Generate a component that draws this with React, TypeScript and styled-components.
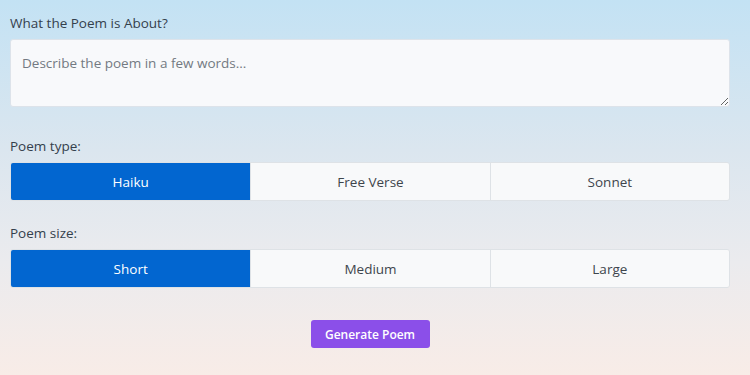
import React, { useState } from 'react'
import styled, { createGlobalStyle } from 'styled-components'

const GlobalStyle = createGlobalStyle`
  html, body {
    margin: 0;
    padding: 0;
    height: 100%;
  }
  body {
    font-family: "Open Sans", "Noto Sans", "Liberation Sans", sans-serif;
    background: linear-gradient(180deg, #c3e2f4 0%, #dbe6ef 40%, #ebebee 70%, #f8ece7 100%);
    min-height: 375px;
    color: #2b3a4a;
  }
`

const Page = styled.div`
  width: 720px;
  padding: 14px 0 0 10px;
  display: flex;
  flex-direction: column;
`

const Label = styled.label`
  display: block;
  font-size: 13.5px;
  line-height: 18px;
  color: #34404c;
  margin-bottom: 7px;
`

const Field = styled.div<{ $gap: number }>`
  margin-bottom: ${p => p.$gap}px;
`

const TextArea = styled.textarea`
  display: block;
  box-sizing: border-box;
  width: 100%;
  height: 68px;
  padding: 14px 11px;
  border: 1px solid #dde3ea;
  border-radius: 3px;
  background: #f8f9fb;
  font-family: inherit;
  font-size: 13.5px;
  color: #333;
  resize: vertical;
  outline: none;

  &::placeholder {
    color: #737a82;
  }
`

const Segments = styled.div`
  display: grid;
  grid-template-columns: repeat(3, 1fr);
  border-radius: 3px;
  overflow: hidden;
  border: 1px solid #dee2e6;
`

const Segment = styled.button<{ $active: boolean }>`
  height: 37px;
  border: none;
  border-left: 1px solid #dee2e6;
  background: ${p => (p.$active ? '#0266d0' : '#f8f9fa')};
  color: ${p => (p.$active ? '#ffffff' : '#3e454c')};
  font-family: inherit;
  font-size: 13.5px;
  cursor: pointer;

  &:first-child {
    border-left: none;
  }
`

const Actions = styled.div`
  display: flex;
  justify-content: center;
  margin-top: 9px;
`

const GenerateButton = styled.button`
  width: 119px;
  height: 28px;
  border: none;
  border-radius: 3px;
  background: #8b4fe9;
  color: #ffffff;
  font-family: inherit;
  font-weight: 600;
  font-size: 12px;
  cursor: pointer;
`

const TYPES = ['Haiku', 'Free Verse', 'Sonnet']
const SIZES = ['Short', 'Medium', 'Large']

export default function App() {
  const [type, setType] = useState('Haiku')
  const [size, setSize] = useState('Short')

  return (
    <>
      <GlobalStyle />
      <Page>
        <Field $gap={30}>
          <Label>What the Poem is About?</Label>
          <TextArea placeholder="Describe the poem in a few words..." />
        </Field>
        <Field $gap={23}>
          <Label>Poem type:</Label>
          <Segments>
            {TYPES.map(t => (
              <Segment key={t} $active={t === type} onClick={() => setType(t)}>{t}</Segment>
            ))}
          </Segments>
        </Field>
        <Field $gap={23}>
          <Label>Poem size:</Label>
          <Segments>
            {SIZES.map(s => (
              <Segment key={s} $active={s === size} onClick={() => setSize(s)}>{s}</Segment>
            ))}
          </Segments>
        </Field>
        <Actions>
          <GenerateButton>Generate Poem</GenerateButton>
        </Actions>
      </Page>
    </>
  )
}
